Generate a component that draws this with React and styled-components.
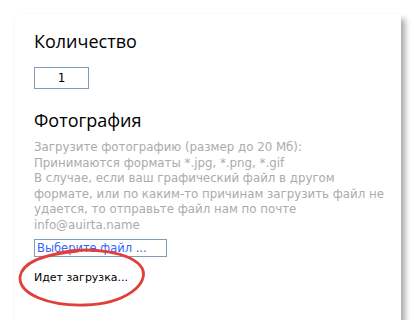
import React from "react";
import styled, { createGlobalStyle } from "styled-components";

const GlobalStyle = createGlobalStyle`
  html, body {
    margin: 0;
    padding: 0;
    background: #ffffff;
  }
`;

const Page = styled.div`
  padding: 14px 0 0 15px;
`;

const Card = styled.div`
  position: relative;
  width: 386px;
  height: 306px;
  box-sizing: border-box;
  padding: 16px 19px 0 19px;
  background: #ffffff;
  box-shadow: 4px 5px 6px rgba(0, 0, 0, 0.35);
  font-family: "DejaVu Sans", Tahoma, sans-serif;
`;

const Title = styled.div`
  font-family: "Open Sans", "DejaVu Sans", sans-serif;
  font-size: 18px;
  line-height: 22px;
  color: #000;
  margin-top: ${(p) => p.$top || 0}px;
`;

const QtyInput = styled.div`
  width: 55px;
  height: 22px;
  box-sizing: border-box;
  margin-top: 15px;
  border: 1px solid #7f9db9;
  font-size: 12px;
  line-height: 20px;
  text-align: center;
  color: #000;
`;

const Info = styled.div`
  margin-top: 9px;
  font-size: 11.8px;
  line-height: 15.5px;
  color: #ababab;
  white-space: nowrap;
`;

const FileButton = styled.div`
  width: 133px;
  height: 18px;
  box-sizing: border-box;
  margin-top: 6px;
  border: 1px solid #7f9db9;
  padding-left: 2px;
  font-size: 11.5px;
  line-height: 16px;
  color: #3366ff;
`;

const Status = styled.div`
  margin-top: 14px;
  font-size: 11px;
  line-height: 14px;
  color: #000;
`;

const Scribble = styled.svg`
  position: absolute;
  left: 0;
  top: 0;
  pointer-events: none;
`;

export default function App() {
  return (
    <>
      <GlobalStyle />
      <Page>
        <Card>
          <Title>Количество</Title>
          <QtyInput>1</QtyInput>
          <Title $top={20}>Фотография</Title>
          <Info>
            Загрузите фотографию (размер до 20 Мб):
            <br />
            Принимаются форматы *.jpg, *.png, *.gif
            <br />
            В случае, если ваш графический файл в другом
            <br />
            формате, или по каким-то причинам загрузить файл не
            <br />
            удается, то отправьте файл нам по почте
            <br />
            info@auirta.name
          </Info>
          <FileButton>Выберите файл ...</FileButton>
          <Status>Идет загрузка...</Status>
          <Scribble width="386" height="306" viewBox="15 14 386 306">
            <path
              d="M 58 253 C 90 246, 132 252, 142 268 C 150 284, 125 304, 85 305 C 48 306, 19 294, 20 277 C 22 262, 45 254, 78 251"
              fill="none"
              stroke="#e0403a"
              strokeWidth="2.8"
              strokeLinecap="round"
            />
          </Scribble>
        </Card>
      </Page>
    </>
  );
}
